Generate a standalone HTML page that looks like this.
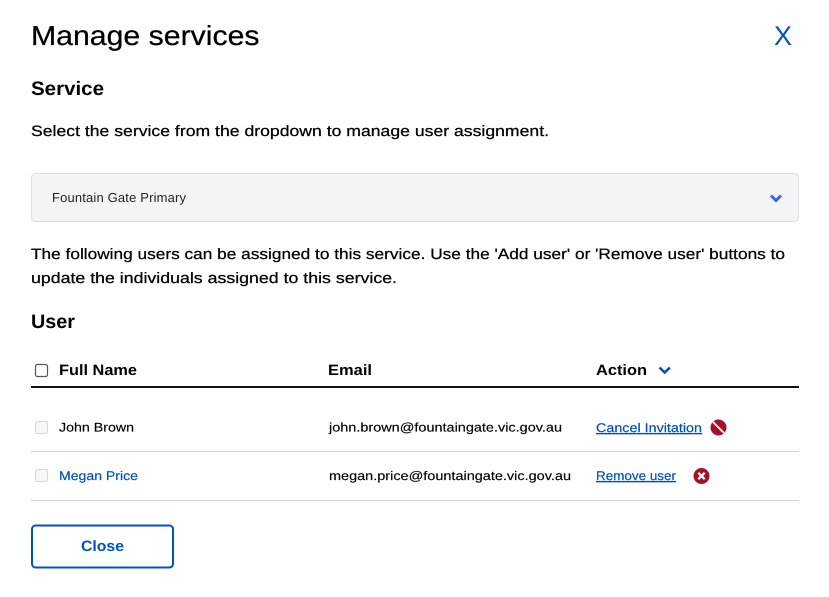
<!DOCTYPE html>
<html lang="en"><head><meta charset="utf-8"><title>Manage services</title>
<style>
html,body{margin:0;padding:0;background:#fff;width:829px;height:597px;overflow:hidden}
svg{display:block}
text{font-family:"Liberation Sans",sans-serif;fill:#000;text-rendering:geometricPrecision}
.b{font-weight:700}
.m{stroke:#000;stroke-width:.25}
.l{fill:#0052c2;stroke:#0052c2;stroke-width:.2}
</style></head><body>
<svg width="829" height="597" viewBox="0 0 829 597" xmlns="http://www.w3.org/2000/svg">
<text x="31" y="45" font-size="27.5" textLength="228.5" lengthAdjust="spacingAndGlyphs" class="m">Manage services</text>
<text x="774" y="45" font-size="27" style="fill:#0052c2" textLength="18" lengthAdjust="spacingAndGlyphs">X</text>
<text x="31" y="95" font-size="19.5" class="b" textLength="73" lengthAdjust="spacingAndGlyphs">Service</text>
<text x="31" y="136" font-size="15" class="m" textLength="518" lengthAdjust="spacingAndGlyphs">Select the service from the dropdown to manage user assignment.</text>
<rect x="31.5" y="173.5" width="767" height="48" rx="4" fill="#f4f4f7" stroke="#dcdce1"/>
<text x="52" y="202" font-size="13" style="fill:#222" textLength="134" lengthAdjust="spacing">Fountain Gate Primary</text>
<path d="M771 195.5l5 5 5-5" fill="none" stroke="#3e66e0" stroke-width="3"/>
<text x="31" y="259" font-size="15" class="m" textLength="754" lengthAdjust="spacingAndGlyphs">The following users can be assigned to this service. Use the 'Add user' or 'Remove user' buttons to</text>
<text x="31" y="283" font-size="15" class="m" textLength="366" lengthAdjust="spacingAndGlyphs">update the individuals assigned to this service.</text>
<text x="31" y="328" font-size="19.5" class="b" textLength="44" lengthAdjust="spacingAndGlyphs">User</text>

<rect x="35.5" y="364.5" width="12" height="12" rx="2" fill="#fff" stroke="#555" stroke-width="1.2"/>
<text x="59" y="375" font-size="15" class="b" textLength="78" lengthAdjust="spacingAndGlyphs">Full Name</text>
<text x="328" y="375" font-size="15" class="b" textLength="44" lengthAdjust="spacingAndGlyphs">Email</text>
<text x="596" y="375" font-size="15" class="b" textLength="51" lengthAdjust="spacingAndGlyphs">Action</text>
<path d="M659.5 367.5l5.2 5 5.2-5" fill="none" stroke="#0052c2" stroke-width="2.6"/>
<rect x="31" y="386" width="768" height="2" fill="#111"/>

<rect x="35.5" y="421.5" width="12" height="12" rx="2" fill="#f6f6f6" stroke="#d8d8d8"/>
<text x="59" y="431.5" font-size="12.5" class="m" style="stroke-width:.15" textLength="75" lengthAdjust="spacingAndGlyphs">John Brown</text>
<text x="329" y="431.5" font-size="12.5" class="m" style="stroke-width:.15" textLength="233" lengthAdjust="spacingAndGlyphs">john.brown@fountaingate.vic.gov.au</text>
<text x="596" y="432" font-size="12.5" class="l" text-decoration="underline" textLength="106" lengthAdjust="spacingAndGlyphs">Cancel Invitation</text>
<circle cx="718.5" cy="427.5" r="8" fill="#a8102e"/>
<path d="M713 422l11 11" stroke="#fff" stroke-width="1.8"/>
<rect x="31" y="451" width="768" height="1" fill="#d6d6d6"/>

<rect x="35.5" y="469.5" width="12" height="12" rx="2" fill="#f6f6f6" stroke="#d8d8d8"/>
<text x="59" y="480" font-size="12.5" class="l" textLength="79" lengthAdjust="spacingAndGlyphs">Megan Price</text>
<text x="329" y="480" font-size="12.5" class="m" style="stroke-width:.15" textLength="242" lengthAdjust="spacingAndGlyphs">megan.price@fountaingate.vic.gov.au</text>
<text x="596" y="480" font-size="12.5" class="l" text-decoration="underline" textLength="80" lengthAdjust="spacingAndGlyphs">Remove user</text>
<circle cx="701.5" cy="476" r="8" fill="#a8102e"/>
<path d="M698.3 472.8l6.4 6.4M704.7 472.8l-6.4 6.4" stroke="#fff" stroke-width="2.2"/>
<rect x="31" y="500" width="768" height="1" fill="#d6d6d6"/>

<rect x="32" y="525.5" width="141" height="42" rx="3.5" fill="#fff" stroke="#0052c2" stroke-width="2"/>
<text x="81" y="551" font-size="15" class="b" style="fill:#0052c2" textLength="43" lengthAdjust="spacingAndGlyphs">Close</text>
</svg>
</body></html>
